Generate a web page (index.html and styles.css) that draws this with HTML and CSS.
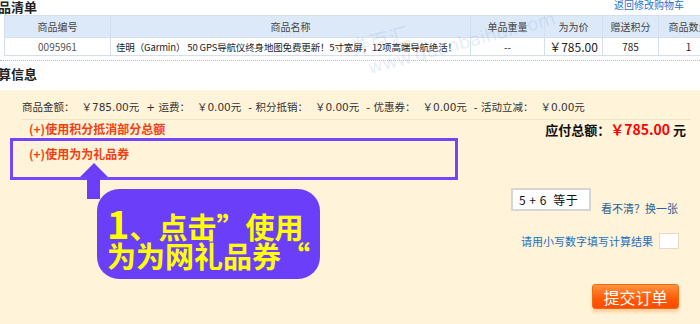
FILE: index.html
```html
<!DOCTYPE html>
<html lang="zh-CN">
<head>
<meta charset="utf-8">
<title>结算</title>
<link rel="stylesheet" href="styles.css">
</head>
<body>
<div class="page">
  <div class="list-head">
    <h2 class="title">商品清单</h2>
    <a class="back-link">返回修改购物车</a>
  </div>
  <table class="goods">
    <thead>
      <tr><th class="c-id">商品编号</th><th class="c-name">商品名称</th><th class="c-w">单品重量</th><th class="c-p">为为价</th><th class="c-pt">赠送积分</th><th class="c-q">商品数量</th></tr>
    </thead>
    <tbody>
      <tr><td>0095961</td><td class="name">佳明（Garmin） 50 GPS导航仪终身地图免费更新！5寸宽屏，12项高端导航绝活！</td><td>--</td><td class="price">￥785.00</td><td>785</td><td>1</td></tr>
    </tbody>
  </table>
  <div class="dots"></div>
  <h2 class="title title2">结算信息</h2>
  <div class="settle">
    <div class="sum-line">
      <span>商品金额：</span><span>￥785.00元</span>
      <span>+ 运费：</span><span>￥0.00元</span>
      <span>- 积分抵销：</span><span>￥0.00元</span>
      <span>- 优惠券：</span><span>￥0.00元</span>
      <span>- 活动立减：</span><span>￥0.00元</span>
    </div>
    <div class="pay-row">
      <a class="use">(+)使用积分抵消部分总额</a>
      <div class="total">应付总额：<span class="amt">￥785.00</span> 元</div>
    </div>
    <div class="coupon-box"><a class="use">(+)使用为为礼品券</a></div>
    <div class="verify">
      <div class="captcha-row"><div class="captcha">5 + 6&nbsp; 等于</div><a class="refresh">看不清？换一张</a></div>
      <div class="answer-row"><span class="hint">请用小写数字填写计算结果</span><span class="answer"></span></div>
      <button class="submit">提交订单</button>
    </div>
    <svg class="arrow" width="28" height="36" viewBox="0 0 28 36"><polygon points="14,0 28,14 20,14 20,36 7,36 7,14 0,14" fill="#6b3ffa"/></svg>
    <div class="bubble"><span class="num">1</span>、点击”使用<br>为为网礼品券“</div>
  </div>
  <svg class="watermark" width="300" height="90" viewBox="0 0 300 90">
    <text class="wm-cn" x="12" y="56" transform="rotate(-15 12 56)">券百汇</text>
    <text class="wm-url" x="30" y="74" transform="rotate(-15 30 74)">www.quanbaihui.com</text>
  </svg>
</div>
</body>
</html>
```

FILE: styles.css
```css
* { box-sizing: border-box; }
html, body { margin: 0; padding: 0; background: #fff; }
body { font-family: "Noto Sans CJK SC", "DejaVu Sans", sans-serif; font-size: 12px; color: #333; }
.page { position: relative; width: 700px; height: 324px; overflow: hidden; }
.list-head { display: flex; justify-content: space-between; align-items: flex-start; height: 15px; }
.title { margin: 0 0 0 -15px; font-size: 13px; font-weight: bold; line-height: 14px; color: #222; }
.back-link { color: #1f6fd0; font-size: 10px; line-height: 10px; padding-right: 16px; }
.goods { margin-left: 4px; width: 714px; border-collapse: collapse; table-layout: fixed; font-size: 10px; }
.goods th, .goods td { border: 1px solid #d3dfec; text-align: center; font-weight: normal; padding: 0; white-space: nowrap; overflow: hidden; }
.goods th { background: #dce9f9; height: 22px; color: #444; }
.goods td { background: #fff; height: 18px; color: #222; }
.goods td:first-child { color: #555; }
.c-id { width: 106px; } .c-name { width: 360px; } .c-w { width: 74px; } .c-p { width: 58px; } .c-pt { width: 56px; } .c-q { width: 60px; }
.goods td.name { text-align: left; padding-left: 5px; font-size: 9.5px; letter-spacing: -0.15px; }
.goods td.price { font-size: 12px; color: #222; }
.dots { margin-top: 4px; border-top: 1px dotted #bbb; height: 1px; }
.title2 { padding-top: 5px; height: 29px; line-height: 16px; margin-top: 0; }
.settle { position: relative; background: #fff3d9; height: 234px; }
.sum-line { display: flex; gap: 7px; margin: 0 10px 0 22px; padding: 10px 0 5px; line-height: 14px; border-bottom: 1px solid #efe2c4; white-space: nowrap; color: #333; font-family: "DejaVu Sans", "Noto Sans CJK SC", sans-serif; font-size: 10.5px; }
.pay-row { display: flex; justify-content: space-between; height: 18px; line-height: 18px; padding: 0 14px 0 29px; }
.use { color: #f4400c; font-weight: bold; font-size: 12px; }
.total { font-weight: bold; font-size: 13px; color: #111; }
.amt { color: #ff0000; font-size: 14px; }
.coupon-box { margin-left: 10px; width: 448px; height: 42px; border: 3px solid #7246ff; padding: 5px 0 0 16px; line-height: 16px; }
.verify { display: flex; flex-direction: column; align-items: flex-end; padding-right: 21px; margin-top: 8px; }
.captcha-row { display: flex; align-items: flex-start; }
.captcha { width: 80px; height: 23px; background: #fff; border: 2px solid #d6d6d6; font-size: 12px; line-height: 19px; padding-left: 6px; color: #111; letter-spacing: 0.5px; }
.refresh { margin: 14px 1px 0 10px; line-height: 13px; color: #2b5f98; font-size: 11px; }
.answer-row { display: flex; align-items: center; margin-top: 18px; height: 16px; }
.hint { color: #1d6fc3; line-height: 16px; font-size: 11px; }
.answer { width: 20px; height: 16px; margin-left: 6px; background: #fff; border: 1px solid #e3dccb; }
.submit { margin-top: 35px; width: 87px; height: 25px; border: 1px solid #f26a10; border-radius: 3px; background: linear-gradient(#ff9440, #ff5a05 60%, #ff4a00); color: #fff; font-family: "Noto Sans CJK SC", sans-serif; font-size: 16px; line-height: 22px; padding: 0; box-shadow: 0 3px 3px rgba(255, 140, 40, 0.35); }
.arrow { position: absolute; left: 80px; top: 73px; }
.bubble { position: absolute; left: 97px; top: 99px; width: 223px; height: 90px; border-radius: 22px; background: #6b3ffa; color: #ffff00; font-weight: bold; font-size: 29px; line-height: 29px; padding: 19px 0 0 10px; white-space: nowrap; }
.bubble .num { font-size: 38px; line-height: 29px; }
.watermark { position: absolute; left: 340px; top: 0; pointer-events: none; }
.watermark text { fill: rgba(125, 165, 228, 0.2); }
.wm-cn { font-family: "Noto Sans CJK SC", sans-serif; font-size: 20px; }
.wm-url { font-family: "DejaVu Sans", sans-serif; font-size: 18px; }
```
